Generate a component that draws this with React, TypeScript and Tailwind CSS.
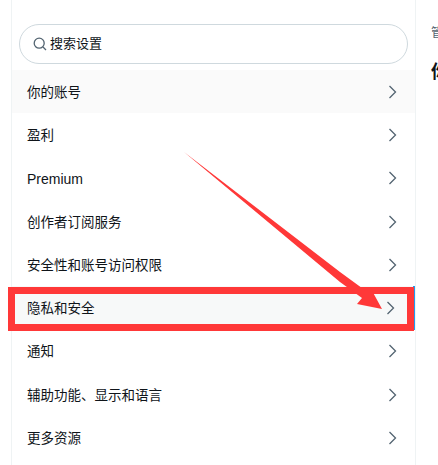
const rows = ["你的账号","盈利","Premium","创作者订阅服务","安全性和账号访问权限","隐私和安全","通知","辅助功能、显示和语言","更多资源"];

function Chevron() {
  return (
    <svg width="20" height="20" viewBox="0 0 20 20" fill="none" stroke="#536471" strokeWidth="1.3" className="shrink-0">
      <path d="M6.5 4 L12.5 10 L6.5 16" />
    </svg>
  );
}

export default function App() {
  return (
    <div className="relative w-[438px] h-[465px] overflow-hidden bg-white flex" style={{ fontFamily: '"Liberation Sans","Noto Sans CJK SC",sans-serif' }}>
      <div className="ml-[11px] w-[405px] h-[465px] shrink-0 border-x border-[#eff3f4] overflow-hidden">
        <div className="h-[24px] -mt-[16px] pl-[18px] text-[17px] leading-[18px] font-bold text-[#0f1419]">设置</div>
        <div className="h-[16px]"></div>
        <div className="mx-[7px] h-[40px] rounded-full border border-[#cfd9de] flex items-center pl-[12px] gap-[2px]">
          <svg width="16" height="16" viewBox="0 0 16 16" fill="none" stroke="#536471" strokeWidth="1.3"><circle cx="7.2" cy="7.2" r="5" /><path d="M11 11 L14 14" /></svg>
          <span className="text-[13px] text-[#0f1419]">搜索设置</span>
        </div>
        <div className="mt-[6px]">
          {rows.map((r, i) => (
            <div key={r} className={`h-[43.3px] flex items-center justify-between pl-[15px] pr-[12px] ${i === 0 ? "bg-[#fafafa]" : ""} ${i === 5 ? "bg-[#f7f9f9] border-r-2 border-[#1d9bf0]" : ""}`}>
              <span className={`leading-[20px] pt-[2px] text-[#0f1419] ${i === 2 ? "text-[14px]" : "text-[13.5px]"}`}>{r}</span>
              <Chevron />
            </div>
          ))}
        </div>
      </div>
      <div className="pl-[15px] overflow-hidden whitespace-nowrap">
        <div className="mt-[26px] text-[12px] leading-[14px] text-[#536471]">管理</div>
        <div className="mt-[22px] text-[18px] leading-[20px] font-bold text-[#0f1419]">你的账号</div>
      </div>
      <div className="absolute left-[8px] top-[287px] w-[406px] h-[44px] border-[7px] border-[#ff3838]"></div>
      <svg className="absolute left-0 top-0 pointer-events-none" width="438" height="465" viewBox="0 0 438 465">
        <polygon fill="#ff3838" points="184,152 340,272 366,291 370,287 382,309 357,304 362,298 340,282" />
      </svg>
    </div>
  );
}
